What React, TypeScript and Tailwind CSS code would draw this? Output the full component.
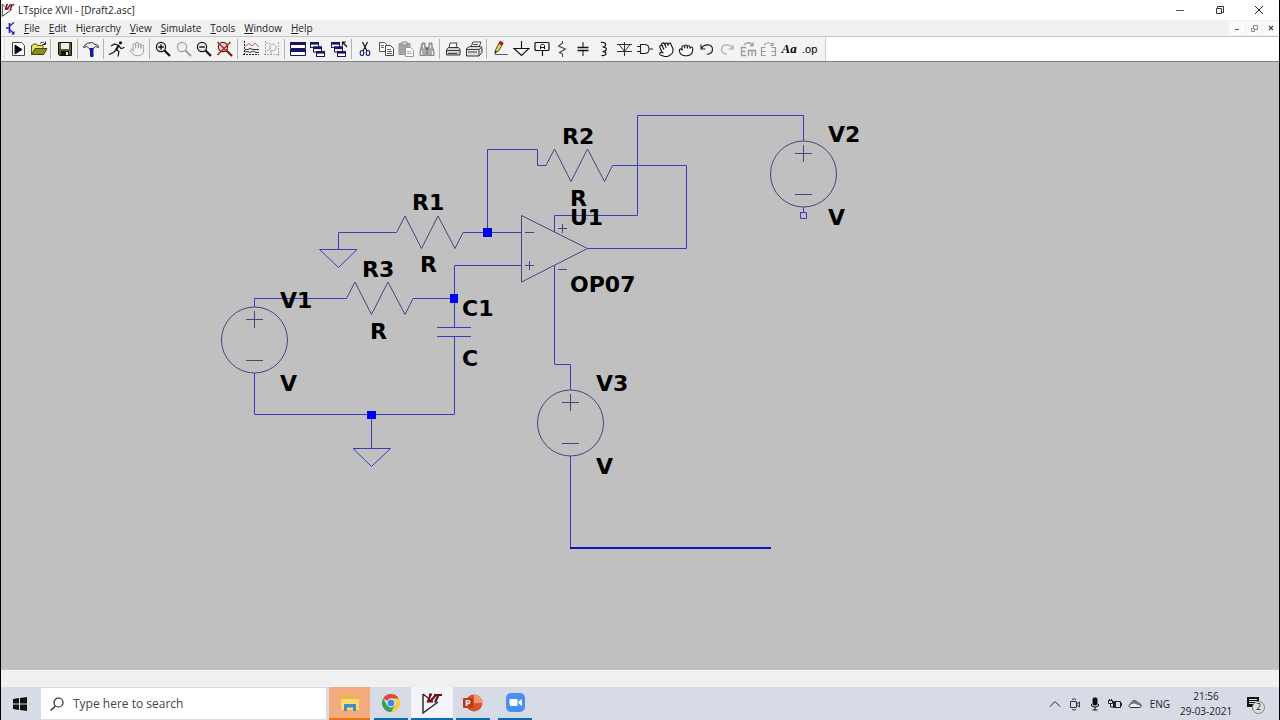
import type { ReactNode } from "react";
import { Hand, HandGrab } from "lucide-react";

type Tool = { name: string; icon: ReactNode; disabled?: boolean };
type ToolGroup = { width: string; tools: Tool[] };

function Icon({ children }: { children: ReactNode }) {
  return (
    <svg width="18" height="18" viewBox="0 0 18 18" fill="none" stroke="#111" strokeWidth="1" aria-hidden="true">
      {children}
    </svg>
  );
}

function Magnifier({ color, glass, sign }: { color: string; glass: string; sign?: "plus" | "minus" | "cross" }) {
  return (
    <Icon>
      <circle cx="7" cy="7" r="4.600" fill={glass} stroke={color} strokeWidth="1.200" />
      <path d="M10.500 10.500l5.500 5.500" stroke={color} strokeWidth="2.200" />
      {sign === "plus" && <path d="M7 4.200v5.600M4.200 7h5.600" stroke={color} strokeWidth="1.400" />}
      {sign === "minus" && <path d="M4.200 7h5.600" stroke={color} strokeWidth="1.400" />}
      {sign === "cross" && <path d="M1.500 2l13 13M14.500 2l-13 13" stroke="#d01818" strokeWidth="1.500" />}
    </Icon>
  );
}

function Cascade({ arrow }: { arrow?: boolean }) {
  return (
    <Icon>
      {[
        [1, 2],
        [4, 6.5],
        [7, 11],
      ].map(([x, y]) => (
        <g key={x}>
          <rect x={x + 0.5} y={y + 0.5} width="8" height="5" fill="#fff" stroke="#16165e" />
          <rect x={x} y={y} width="9" height="2.600" fill="#16165e" stroke="none" />
        </g>
      ))}
      {arrow && <path d="M17 7l-4-4.500M12.500 5.500v-3.500h3.500" strokeWidth="1.200" />}
    </Icon>
  );
}

const groups: ToolGroup[] = [
  {
    width: "w-[43px] pr-px",
    tools: [
      {
        name: "New schematic",
        icon: (
          <Icon>
            <path d="M3.500 2.500h9l3 3v10h-12z" fill="#fff" stroke="#444" />
            <path d="M6 5l7 4.500L6 14z" fill="#000" />
          </Icon>
        ),
      },
      {
        name: "Open",
        icon: (
          <Icon>
            <path d="M1.500 14.500v-9h1l1-1.500h3l1 1.500h5.500v3" fill="#e7e36a" stroke="#55550a" />
            <path d="M1.500 14.500l3.500-6h12l-3.500 6z" fill="#8b8b18" stroke="#44440a" />
            <path d="M10 3.500c1.500-1.800 3.500-1.500 5 .5M15.500 1.500v3h-3" stroke="#333" />
          </Icon>
        ),
      },
    ],
  },
  {
    width: "w-[27px]",
    tools: [
      {
        name: "Save",
        icon: (
          <Icon>
            <path d="M2.500 2.500h13v13h-12l-1-1z" fill="#5c5c22" stroke="#111" />
            <rect x="5" y="3" width="8" height="6" fill="#eee" stroke="none" />
            <rect x="5" y="11" width="8" height="5" fill="#111" stroke="none" />
            <rect x="10" y="12" width="2" height="3" fill="#eee" stroke="none" />
          </Icon>
        ),
      },
    ],
  },
  {
    width: "w-[26px]",
    tools: [
      {
        name: "Control panel",
        icon: (
          <Icon>
            <path
              d="M1.500 7.500c0-2 1.500-2.500 2.500-2.500.5-2 2.500-2.500 4-2 1.500-.8 4-.5 4.500 1.500 2-.3 4 .5 4 3l-3-1-2 2H7L5 6.500z"
              fill="#e4eeee"
              stroke="#333"
            />
            <path d="M8 8.500h3v2H8zM8.500 10.500h2.500v6H8.500z" fill="#1717b5" stroke="#16168a" />
          </Icon>
        ),
      },
    ],
  },
  {
    width: "w-[46px]",
    tools: [
      {
        name: "Run",
        icon: (
          <Icon>
            <circle cx="12.500" cy="2.800" r="1.600" fill="#111" stroke="none" />
            <path d="M11 5L8 10" strokeWidth="2.200" />
            <path d="M10.500 5.500L6.500 4 3 6M11 6l2 2.500 3.500-1M8 9.500l3 2-1 5M8 10l-2.500 2.500-4.500 2" strokeWidth="1.200" />
          </Icon>
        ),
      },
      { name: "Halt", disabled: true, icon: <Hand size={16} color="#999" strokeWidth={1.5} /> },
    ],
  },
  {
    width: "w-[88px]",
    tools: [
      { name: "Zoom in", icon: <Magnifier color="#111" glass="#e2f0ee" sign="plus" /> },
      { name: "Pan", disabled: true, icon: <Magnifier color="#a2a2a2" glass="#eee" /> },
      { name: "Zoom out", icon: <Magnifier color="#111" glass="#e2f0ee" sign="minus" /> },
      { name: "Zoom full extents", icon: <Magnifier color="#3a2222" glass="#dde" sign="cross" /> },
    ],
  },
  {
    width: "w-[47px]",
    tools: [
      {
        name: "Autorange",
        icon: (
          <Icon>
            <path d="M2.500 1v15M1 14.500h16" stroke="#222" strokeDasharray="2 1" />
            <path d="M3 9.500h3l2-1 3 1h6M3 12l3-.5 2 1 3-1.500 3 1.500h3" stroke="#333" />
            <path d="M3 6.500l4-3 3 2.500 3-3 4 4" stroke="#c75b62" />
          </Icon>
        ),
      },
      {
        name: "FFT",
        disabled: true,
        icon: (
          <Icon>
            <path d="M2.500 1v15M1 14.500h15M15.500 2v14M3 3.500h4" stroke="#a4a4a4" strokeDasharray="2 1" />
            <path d="M4 11l3-2V5.500c2-3 6-1 6 2s-3 4-5 2.500v4" stroke="#a4a4a4" />
          </Icon>
        ),
      },
    ],
  },
  {
    width: "w-[67px]",
    tools: [
      {
        name: "Tile windows",
        icon: (
          <Icon>
            <path d="M1.500 2.500h15v6h-15zM1.500 9.500h15v6h-15z" fill="#fff" stroke="#16165e" />
            <path d="M1 2h16v3H1zM1 9h16v3H1z" fill="#16165e" stroke="none" />
          </Icon>
        ),
      },
      { name: "Cascade windows", icon: <Cascade /> },
      { name: "Close windows", icon: <Cascade arrow /> },
    ],
  },
  {
    width: "w-[88px]",
    tools: [
      {
        name: "Cut",
        icon: (
          <Icon>
            <path d="M6.500 2l4.500 9M11.500 2L7 11" strokeWidth="1.200" />
            <ellipse cx="6" cy="13" rx="1.800" ry="2.500" stroke="#1c2a80" strokeWidth="1.200" />
            <ellipse cx="12" cy="13" rx="1.800" ry="2.500" stroke="#1c2a80" strokeWidth="1.200" />
          </Icon>
        ),
      },
      {
        name: "Copy",
        icon: (
          <Icon>
            <path d="M2.500 2.500h5l2 2v7h-7z" fill="#fff" stroke="#555" />
            <path d="M8.500 5.500h5l3 3v7h-8z" fill="#fff" stroke="#444" />
            <path d="M4 5.500h3M4 7.500h3M10 9.500h4M10 11.500h5M10 13.500h5" stroke="#666" />
          </Icon>
        ),
      },
      {
        name: "Paste",
        disabled: true,
        icon: (
          <Icon>
            <path d="M2 3.500h11v11H2z" fill="#a5a5a5" stroke="#999" />
            <path d="M5 2h5v3H5z" fill="#ddd" stroke="#888" />
            <path d="M8.500 7.500h5l3 3v6h-8z" fill="#fff" stroke="#999" />
            <path d="M10 11.500h4M10 13.500h5" stroke="#aaa" />
          </Icon>
        ),
      },
      {
        name: "Find",
        disabled: true,
        icon: (
          <Icon>
            <path d="M4 3h3v3l1.500 2v7.500H2V11zM11 3h3v3l2 5v4.500H9.500V8L11 6z" fill="#aaa" stroke="#888" />
            <path d="M3.500 11v4M14.500 11v4M5.500 5v3M12.500 5v3" stroke="#eee" />
            <path d="M7.500 8.500h3" stroke="#666" strokeWidth="2" />
          </Icon>
        ),
      },
    ],
  },
  {
    width: "w-[47px]",
    tools: [
      {
        name: "Print",
        icon: (
          <Icon>
            <path d="M5 8l1-5h7l-1 5" fill="#fff" stroke="#444" />
            <path d="M2.500 9.500l2-2h10l1.500 2v5.500H2.500z" fill="#ccc" stroke="#333" />
            <path d="M2.500 10.500H16M4 13.500h9" stroke="#444" />
          </Icon>
        ),
      },
      {
        name: "Print setup",
        icon: (
          <Icon>
            <path d="M6 7l2-5h8l-2 5" fill="#fff" stroke="#444" />
            <path d="M1.500 8.500l3-2h11l1.500 1v5l-3 3.500H1.500z" fill="#ddd" stroke="#333" />
            <path d="M1.500 9.500H14v6M3 12h9M14 9.500l3-2.500M8 4.500h5" stroke="#444" />
          </Icon>
        ),
      },
    ],
  },
  {
    width: "w-[338px] pr-[5px]",
    tools: [
      {
        name: "Wire",
        icon: (
          <Icon>
            <path d="M4 13l1-4 4-7.500 3 1.500-4 7.500z" fill="#f2dc28" stroke="#444" />
            <path d="M9 1.500l3 1.500-1 2-3-1.500z" fill="#d11b1b" stroke="#a01515" />
            <path d="M4 10.500l2 1-2.500 3z" fill="#222" stroke="none" />
            <path d="M4 14.500h13" stroke="#555588" />
          </Icon>
        ),
      },
      { name: "Ground", icon: <Icon><path d="M9.500 1v7.500M2 8.500h15L9.500 15.500z" strokeWidth="1.100" /></Icon> },
      {
        name: "Label net",
        icon: (
          <Icon>
            <path d="M3 2.500h12q1 0 1 1v6q0 1-1 1H3q-1 0-1-1v-6q0-1 1-1zM9.500 10.500v5.500" strokeWidth="1.200" />
            <path d="M7.500 9V5.500l1-1h2l1 1V9M7.500 7.500h4" strokeWidth="1" />
          </Icon>
        ),
      },
      { name: "Resistor", icon: <Icon><path d="M9.500 1v2l-4 3 7 3-6 3.500 3 1.500v3" stroke="#444" strokeWidth="1.100" /></Icon> },
      { name: "Capacitor", icon: <Icon><path d="M9 2v5.500M9 10.500V16" /><path d="M3.500 7.500h11M3.500 10.500h11" strokeWidth="1.400" /></Icon> },
      { name: "Inductor", icon: <Icon><path d="M7 2.500c6-1 6 4.500 1.500 4.500 5 0 5 4.500 0 4.500 5 0 4.500 5-1 4" strokeWidth="1.200" /></Icon> },
      { name: "Diode", icon: <Icon><path d="M9.500 2v14M2 4.500h15M4 4.500l5.500 7 5.500-7M2 11.500h15" stroke="#333" /></Icon> },
      { name: "Component", icon: <Icon><path d="M4.500 4.500h4c6 0 6 9 0 9h-4zM1 6.500h3.500M1 11.500h3.500M13 9h4" stroke="#222" strokeWidth="1.100" /></Icon> },
      { name: "Move", icon: <Hand size={17} color="#111" strokeWidth={1.6} fill="#fff" className="-rotate-[25deg]" /> },
      { name: "Drag", icon: <HandGrab size={16} color="#111" strokeWidth={1.6} fill="#fff" /> },
      { name: "Undo", icon: <Icon><path d="M3.500 8.500C6 3.500 14.500 3.500 14.500 9.500c0 3-2.500 5-5.500 4.500M3 4.500v4.500h4.500" stroke="#222" strokeWidth="1.200" /></Icon> },
      { name: "Redo", disabled: true, icon: <Icon><path d="M14.500 8.500C12 3.500 3.500 3.500 3.500 9.500c0 3 2.500 5 5.500 4.500M15 4.500v4.500h-4.500" stroke="#aaa" strokeWidth="1.200" /></Icon> },
      {
        name: "Rotate",
        disabled: true,
        icon: <Icon><path d="M7 7.500H2.500v8H7M2.500 11.500h4M9.500 16V10.500h7V16M13 10.500V16M5 5c2-3 7-3 9 0M14 2.500v3h-3" stroke="#999" strokeWidth="1.300" /></Icon>,
      },
      {
        name: "Mirror",
        disabled: true,
        icon: <Icon><path d="M6.500 7.500H2.500v8h4M2.500 11.500h4M12.500 7.500h4v8h-4M16.500 11.500h-4M5 5c2-3 7-3 9 0M14 2.500v3h-3" stroke="#999" strokeWidth="1.200" /></Icon>,
      },
      { name: "Text", icon: <span className="font-['Liberation_Serif',serif] text-[13px] leading-4 font-bold text-black italic">Aa</span> },
      { name: "SPICE directive", icon: <span className="font-['Liberation_Sans',sans-serif] text-[11px] leading-4 text-black">.op</span> },
    ],
  },
];

const menus: [string, string, string][] = [
  ["", "F", "ile"],
  ["", "E", "dit"],
  ["H", "i", "erarchy"],
  ["", "V", "iew"],
  ["", "S", "imulate"],
  ["", "T", "ools"],
  ["", "W", "indow"],
  ["", "H", "elp"],
];

function LtLogo({ large }: { large?: boolean }) {
  return (
    <svg className={large ? "h-[22px] w-[22px]" : "h-4 w-[14px]"} viewBox="0 0 22 22" fill="none" aria-hidden="true">
      <path d="M2 2v19L17 10" stroke="#222" strokeWidth="1.400" />
      <path d="M2 2l5 4" stroke="#222" strokeWidth="1.200" />
      <path d="M8 2.500h3M9.500 2.500L7 9.500h5M13 3h8M17.500 3L14 10.500M9 9.500l5.500-6" stroke="#6e0f18" strokeWidth="2.200" />
    </svg>
  );
}

function TitleBar() {
  return (
    <header className="flex h-5 shrink-0 items-center bg-white pr-px">
      <LtLogo />
      <h1 className="ml-[3px] flex-1 text-[10px] leading-4 text-[#222]">LTspice XVII - [Draft2.asc]</h1>
      <button aria-label="Minimize" className="flex h-5 w-[39px] items-center justify-center">
        <svg width="9" height="9" stroke="#555"><path d="M0 4.500h8" /></svg>
      </button>
      <button aria-label="Restore" className="flex h-5 w-[39px] items-center justify-center">
        <svg width="10" height="10" fill="none" stroke="#333"><path d="M1.500 3.500h5v5h-5zM2.500 3V1.500h6v6H7" /></svg>
      </button>
      <button aria-label="Close" className="flex h-5 w-[39px] items-center justify-center">
        <svg width="10" height="10" stroke="#222"><path d="M1 1l8 8M9 1L1 9" /></svg>
      </button>
    </header>
  );
}

function MenuBar() {
  return (
    <nav className="flex h-4 shrink-0 items-center bg-[#f1f1f1]">
      <svg width="17" height="16" fill="none" stroke="#1c1cb8" aria-hidden="true">
        <path d="M5 8h3M8.500 3v10" strokeWidth="1.600" />
        <path d="M8.500 6L13 2.500M8.500 9.500l4.500 4" strokeWidth="1.300" />
        <path d="M13.500 11v3.500H10z" fill="#1c1cb8" stroke="none" />
      </svg>
      <div className="ml-[6px] flex flex-1 gap-[9px]">
        {menus.map(([before, key, after]) => (
          <button key={key + after} className="text-[10px] leading-4 text-[#222]">
            {before}
            <u className="underline-offset-1">{key}</u>
            {after}
          </button>
        ))}
      </div>
      <div className="flex gap-px">
        <button aria-label="Minimize document" className="flex h-[14px] w-4 items-center justify-center bg-[#fafafa]">
          <svg width="6" height="6" stroke="#555"><path d="M1 4.500h4" /></svg>
        </button>
        <button aria-label="Restore document" className="flex h-[14px] w-4 items-center justify-center bg-[#fafafa]">
          <svg width="7" height="7" fill="none" stroke="#888"><path d="M.5 3.500h3v3h-3zM2.500 3V.5h4v4H4" /></svg>
        </button>
        <button aria-label="Close document" className="flex h-[14px] w-4 items-center justify-center bg-[#fafafa]">
          <svg width="6" height="6" stroke="#444"><path d="M1 1l4 4M5 1L1 5" strokeWidth="1.200" /></svg>
        </button>
      </div>
    </nav>
  );
}

function Toolbar() {
  return (
    <div className="flex h-[26px] shrink-0 border-t border-b border-t-[#c4c4c4] border-b-[#808080] bg-white">
      <div role="toolbar" aria-label="Schematic tools" className="flex items-center border-r border-[#d0d0d0] bg-[#f3f3f3]">
        <div className="mr-[3px] ml-[3px] h-5 border-l border-dotted border-[#ccc]" />
        {groups.map((group, i) => (
          <div
            key={i}
            className={`${group.width} flex h-5 items-center ${i === groups.length - 1 ? "pl-[3px]" : i === 0 ? "border-r border-[#b4b4b4]" : "border-r border-[#b4b4b4] pr-[2px] pl-[3px]"}`}
          >
            {group.tools.map((tool) => (
              <button
                key={tool.name}
                aria-label={tool.name}
                disabled={tool.disabled}
                className="flex h-5 min-w-0 flex-1 items-center justify-center"
              >
                {tool.icon}
              </button>
            ))}
          </div>
        ))}
      </div>
    </div>
  );
}

const labels: [string, number, number][] = [
  ["R1", 412, 210],
  ["R", 420, 272],
  ["R3", 362, 277],
  ["R", 370, 339],
  ["V1", 280, 308],
  ["V", 280, 391],
  ["C1", 462, 316],
  ["C", 462, 366],
  ["R2", 562, 144],
  ["R", 570, 206],
  ["U1", 570, 225],
  ["OP07", 570, 292],
  ["V2", 828, 142],
  ["V", 828, 225],
  ["V3", 596, 391],
  ["V", 596, 474],
];

function Resistor({ x, y }: { x: number; y: number }) {
  return <path d={`M${x} ${y}l8.500 -16.500l16.500 32.500l16.500 -32.500l17 32.500l8 -16`} />;
}

function Source({ x, y }: { x: number; y: number }) {
  return (
    <g>
      <circle cx={x} cy={y} r="33" />
      <path d={`M${x - 8.5} ${y - 20.5}h17M${x} ${y - 29}v17M${x - 8.5} ${y + 20.5}h17`} />
    </g>
  );
}

function Schematic() {
  return (
    <svg className="min-h-0 w-full flex-1 bg-[#c0c0c0]" role="img" aria-label="Op-amp schematic">
      <g transform="translate(-1 -62)">
        <g fill="none" stroke="#46467e">
          <Resistor x={396.5} y={232.5} />
          <Resistor x={346.5} y={298.5} />
          <Resistor x={546} y={165.5} />
          <Source x={254.5} y={340} />
          <Source x={803.5} y={174} />
          <Source x={570.5} y={423} />
          <path d="M521.500 215.500v66.500l66-33.500z" />
          <path d="M525 232.500h9M525 265.500h9M529.500 261v9M558 228.500h9M562.500 224v9M558 269.500h9" />
        </g>
        <g fill="none" stroke="#3c3cba">
          <path d="M396.500 232.500H338.500V249M463 232.500H521M487.500 232V149.500H537.500V165.500H546M612.500 165.500H686.500V248.500H587.500" />
          <path d="M554.500 232V215.500H637.500V115.500H803.500V141M803.500 207v6M554.500 265V364.500H570.500V390M570.500 456V548" />
          <path d="M254.500 307V298.500H346.500M413 298.500H454.500M521 265.500H454.500V327.500M454.500 336.500V414.500H254.500V373M371.500 415V448" />
          <path d="M319.500 249.500h37.500l-18.500 18zM353 448.500h37.500l-19 18zM437 327.500h34M437 336.500h34" />
          <path d="M800.500 212.500h6v6h-6z" />
        </g>
        <path d="M570 548H771" stroke="#1010c0" strokeWidth="2" />
        <path d="M483 228h9v9h-9zM450 294h8v9h-8zM367 411h9v8h-9z" fill="#0000f5" />
        <g className="font-['DejaVu_Sans',sans-serif] text-[22px] font-bold" fill="#000">
          {labels.map(([text, x, y]) => (
            <text key={`${x}-${y}`} x={x} y={y}>
              {text}
            </text>
          ))}
        </g>
      </g>
    </svg>
  );
}

function Taskbar() {
  return (
    <footer className="flex h-[33px] shrink-0 items-stretch bg-[#d6dbe6] text-[#222]">
      <button aria-label="Start" className="flex w-10 items-center justify-center pr-[2px]">
        <svg width="14" height="14" fill="#111"><path d="M0 2l6-.9V6.500H0zM7 1l7-1v6.500H7zM0 7.500h6v5.400L0 12zM7 7.500h7V14l-7-1z" /></svg>
      </button>
      <label htmlFor="search" className="my-px flex w-[285px] items-center bg-white pl-[9px]">
        <svg width="14" height="14" fill="none" stroke="#222" strokeWidth="1.200" aria-label="Search">
          <circle cx="8.500" cy="5.500" r="4.500" />
          <path d="M5.500 9L.5 13.500" />
        </svg>
        <input
          id="search"
          type="text"
          placeholder="Type here to search"
          className="ml-[9px] min-w-0 flex-1 bg-transparent text-[12px] leading-4 outline-none placeholder:text-[#444]"
        />
      </label>
      <button aria-label="File Explorer" className="ml-[3px] flex w-[41px] items-center justify-center border-b-2 border-[#ee7410] bg-[#f4ac7e]">
        <svg width="20" height="18">
          <path d="M1 1h7l2 2h8v14H1z" fill="#e8b93c" />
          <path d="M1 5h18v11H1z" fill="#fbdc72" />
          <path d="M4 17v-7h12v7h-3v-3.500H7V17z" fill="#3d8fc4" />
        </svg>
      </button>
      <button aria-label="Chrome" className="ml-1 flex w-[34px] items-center justify-center border-b-2 border-[#0a6bb5]">
        <svg width="18" height="18" viewBox="0 0 18 18">
          <path d="M9 9L1.200 4.500A9 9 0 0 1 16.800 4.500z" fill="#dd4b3e" />
          <path d="M9 9V4.500h7.800A9 9 0 0 1 9 18z" fill="#f7cd45" />
          <path d="M1.200 4.500L5.100 11.250 9 9l3.900 2.250L9 18A9 9 0 0 1 1.200 4.500z" fill="#36a058" />
          <circle cx="9" cy="9" r="4.400" fill="#fff" />
          <circle cx="9" cy="9" r="3.500" fill="#4587ea" />
        </svg>
      </button>
      <button aria-label="LTspice" className="ml-[3px] flex w-[42px] items-center justify-center border-b-2 border-[#0a6bb5] bg-[#f2f4f9]">
        <LtLogo large />
      </button>
      <button aria-label="PowerPoint" className="ml-[3px] flex w-[34px] items-center justify-center border-b-2 border-[#0a6bb5]">
        <svg width="20" height="18">
          <circle cx="11" cy="9" r="8.500" fill="#d9532f" />
          <path d="M11 .5a8.500 8.500 0 0 1 8.500 8.500H11z" fill="#f09a78" />
          <rect y="4" width="10" height="10" rx="1" fill="#b93a1b" />
          <text x="2" y="12" fill="#fff" className="font-['Open_Sans',sans-serif] text-[9px] font-bold">P</text>
        </svg>
      </button>
      <button aria-label="Zoom" className="ml-2 flex w-[34px] items-center justify-center border-b-2 border-[#0a6bb5]">
        <svg width="19" height="19">
          <rect width="19" height="19" rx="5" fill="#478ff0" />
          <path d="M3.500 6h8v7h-6q-2 0-2-2zM12.500 8.500l3.500-2.500v7l-3.500-2.500z" fill="#fff" />
        </svg>
      </button>
      <div className="flex-1" />
      <div className="flex items-center">
        <button aria-label="Show hidden icons" className="flex w-5 justify-center">
          <svg width="12" height="8" fill="none" stroke="#222"><path d="M1 6.500l5-5 5 5" /></svg>
        </button>
        <button aria-label="Meet now" className="flex w-5 justify-center">
          <svg width="12" height="14" fill="none" stroke="#333"><path d="M1.500 4.500h6v6h-6zM8 7l2.500-2v5L8 8M3 2.500q2-1.500 4 0M3 12.500q2 1 4 0" /></svg>
        </button>
        <button aria-label="Microphone" className="flex w-5 justify-center">
          <svg width="10" height="14" fill="none" stroke="#111"><rect x="3" y="1" width="4" height="7" rx="1" fill="#111" /><path d="M1.500 7v2q3.500 2.500 7 0V7M5 10v3M2.500 13h5" /></svg>
        </button>
        <button aria-label="Battery" className="flex w-5 justify-center">
          <svg width="14" height="12" fill="none" stroke="#222"><path d="M5.500 3.500h7v6h-7zM13.500 5v3M.5 2.500h4v3h-4zM1.500 1v1M3.500 1v1M2.500 6v3h3" /><path d="M6 4h2v5H6z" fill="#222" stroke="none" /></svg>
        </button>
        <button aria-label="OneDrive" className="flex w-5 justify-center">
          <svg width="14" height="10" stroke="#333"><path d="M3 8.500C.5 8.500.5 5 3 5 3 1 8.500.5 10 4c4 0 4 4.500 1 4.500z" fill="#eee" /><path d="M2 5.500l4-1 7 2.500C12 3 10 4 10 4 8 .5 3.500 1 3 5z" fill="#777" stroke="none" /></svg>
        </button>
        <span className="ml-[5px] text-[10px] leading-4">ENG</span>
        <time className="ml-[10px] w-[52px] text-center text-[10px] leading-[15px] whitespace-nowrap">
          <span className="block">21:56</span>
          <span className="block">29-03-2021</span>
        </time>
        <button aria-label="2 notifications" className="relative mr-[13px] ml-[14px] h-5 w-5">
          <svg width="16" height="15"><path d="M1 1h12v10H9l-3 3v-3H1z" fill="#111" /><path d="M3 3.500h8M3 5.500h8M3 7.500h6" stroke="#d6dbe6" /></svg>
          <span className="absolute top-[7px] left-[6px] flex h-[13px] w-[13px] items-center justify-center rounded-full border border-[#888] bg-[#ddd] text-[9px] leading-3">2</span>
        </button>
      </div>
    </footer>
  );
}

export default function App() {
  return (
    <div className="flex h-screen flex-col overflow-hidden border-x border-black bg-[#f0f0f0] font-['Open_Sans','Noto_Sans',sans-serif]">
      <TitleBar />
      <MenuBar />
      <Toolbar />
      <Schematic />
      <div className="h-[17px] shrink-0 border-t border-[#fafafa] bg-[#f0f0f0]" />
      <Taskbar />
    </div>
  );
}
